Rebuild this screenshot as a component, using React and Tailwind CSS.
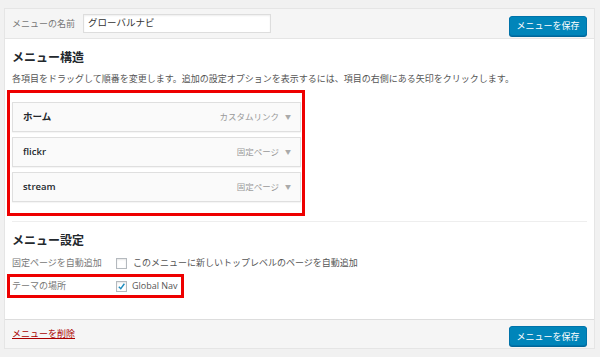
import React from 'react'

const items = [
  { title: 'ホーム', type: 'カスタムリンク', jp: true },
  { title: 'flickr', type: '固定ページ' },
  { title: 'stream', type: '固定ページ' },
]

function SaveButton() {
  return (
    <button className="h-[20px] w-[78px] rounded-[3px] border border-[#0073aa] bg-[#0085ba] text-[9px] leading-none text-white shadow-[0_1px_0_#006799]">
      メニューを保存
    </button>
  )
}

export default function App() {
  return (
    <div
      className="h-[357px] w-[600px] overflow-hidden bg-[#f1f1f1] pl-[4px] pr-[5px] pt-[8px] text-[#444]"
      style={{ fontFamily: '"Open Sans", "Noto Sans CJK JP", sans-serif' }}
    >
      <div className="border border-[#e5e5e5] bg-white">
        <div className="flex h-[30px] items-center border-b border-[#e5e5e5] bg-[#f5f5f5] pl-[7px] pr-[7px]">
          <span className="w-[71px] text-[9px] text-[#777]">メニューの名前</span>
          <div className="flex h-[19px] w-[188px] items-center border border-[#ddd] bg-white pl-[4px] text-[9.5px] text-[#333] shadow-[inset_0_1px_2px_rgba(0,0,0,0.07)]">
            グローバルナビ
          </div>
          <div className="ml-auto">
            <SaveButton />
          </div>
        </div>

        <div className="px-[7px] pt-[12px]">
          <h3 className="text-[12px] font-bold leading-[14px] text-[#23282d]">メニュー構造</h3>
          <p className="mt-[8px] text-[9px] leading-[12px] text-[#555]">
            各項目をドラッグして順番を変更します。追加の設定オプションを表示するには、項目の右側にある矢印をクリックします。
          </p>

          <div className="ml-[-5px] mt-[5px] w-[298px] border-[3px] border-[#ee0000] pb-[11px] pl-[2px] pt-[9px]">
            <div className="flex w-[289px] flex-col gap-[5px]">
              {items.map(it => (
                <div
                  key={it.title}
                  className="flex h-[30px] items-center border border-[#dfdfdf] bg-[#fafafa] pl-[10px] pr-[9px] shadow-[0_1px_1px_rgba(0,0,0,0.04)]"
                >
                  <span className={`text-[9.5px] text-[#23282d] ${it.jp ? 'font-bold' : 'font-semibold'}`}>{it.title}</span>
                  <span className="ml-auto text-[8.5px] text-[#999]">{it.type}</span>
                  <span className="ml-[6px] text-[6px] text-[#aaa]">▼</span>
                </div>
              ))}
            </div>
          </div>

          <div className="mt-[5px] border-t border-[#eee]" />

          <h3 className="mt-[12px] text-[12px] font-bold leading-[14px] text-[#23282d]">メニュー設定</h3>

          <div className="mt-[9px] flex h-[12px] items-center">
            <span className="w-[104px] text-[9px] text-[#777]">固定ページを自動追加</span>
            <span className="h-[11px] w-[11px] border border-[#b4b9be] bg-white shadow-[inset_0_1px_2px_rgba(0,0,0,0.1)]" />
            <span className="ml-[6px] text-[9px] text-[#555]">このメニューに新しいトップレベルのページを自動追加</span>
          </div>

          <div className="ml-[-5px] mt-[5px] flex h-[24px] w-[177px] items-center border-[3px] border-[#ee0000] pl-[2px]">
            <span className="w-[104px] text-[9px] text-[#777]">テーマの場所</span>
            <span className="flex h-[11px] w-[11px] items-center justify-center border border-[#b4b9be] bg-white shadow-[inset_0_1px_2px_rgba(0,0,0,0.1)]">
              <svg width="9" height="9" viewBox="0 0 10 10">
                <path d="M2 5.2 L4.2 7.4 L8.2 2" fill="none" stroke="#1e8cbe" strokeWidth="1.6" />
              </svg>
            </span>
            <span className="ml-[5px] text-[9px] text-[#555]">Global Nav</span>
          </div>

          <div className="h-[21px]" />
        </div>

        <div className="flex h-[29px] items-center border-t border-[#dddddd] bg-[#f5f5f5] pl-[7px] pr-[7px]">
          <a className="text-[9px] text-[#a00] underline">メニューを削除</a>
          <div className="ml-auto">
            <SaveButton />
          </div>
        </div>
      </div>
    </div>
  )
}
